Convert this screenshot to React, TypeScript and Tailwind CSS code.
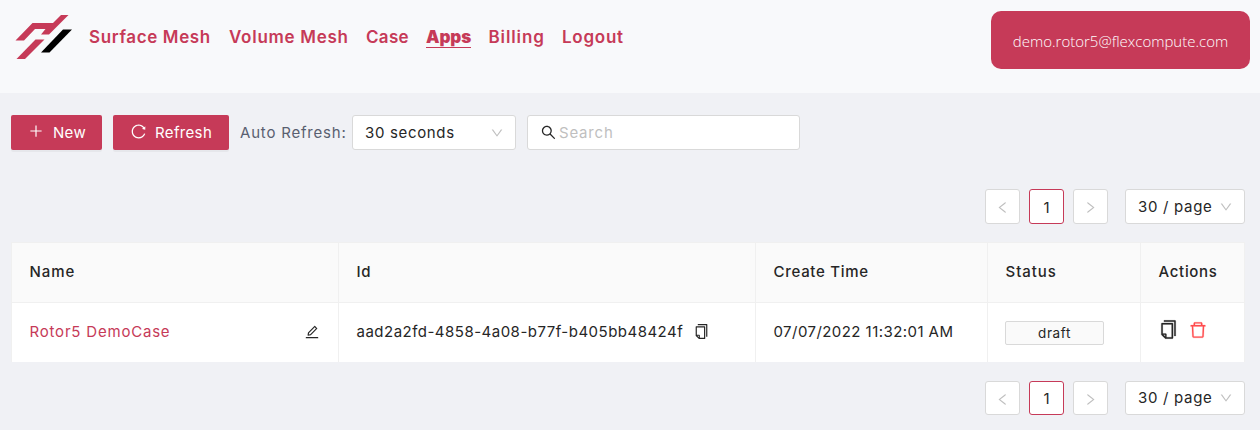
import React from "react";
import {
  AiOutlineCopy,
  AiOutlineDelete,
  AiOutlineDown,
  AiOutlineEdit,
  AiOutlineLeft,
  AiOutlinePlus,
  AiOutlineReload,
  AiOutlineRight,
  AiOutlineSearch,
} from "react-icons/ai";

function Logo() {
  return (
    <svg width="58" height="46" viewBox="0 0 58 46" className="block shrink-0">
      <path fill="#c63a58" d="M0.5 26.500 17.500 9h20.500l8-8H53.500L34 20.500h-8l4.500-5.500H20L9 26.500Z" />
      <path fill="#c63a58" d="M1.500 45 20.500 25.500H29.500L10 45Z" />
      <path fill="#000" d="M26 38.500 48 15.500h9L34.500 38.500Z" />
    </svg>
  );
}

function Pagination() {
  const box = "flex w-[35px] items-center justify-center rounded-[3px] border bg-white";
  return (
    <div className="flex h-full justify-end pr-[15px]">
      <div className={`${box} border-[#d9d9d9]`}>
        <AiOutlineLeft className="mt-0.5 text-[15px] text-[#bfbfbf]" />
      </div>
      <div className={`${box} ml-[9px] border-[#c63a58] text-[#262626]`}>
        <span className="mt-0.5">1</span>
      </div>
      <div className={`${box} ml-[9px] border-[#d9d9d9]`}>
        <AiOutlineRight className="mt-0.5 text-[15px] text-[#bfbfbf]" />
      </div>
      <div className="ml-[17px] flex w-[120px] items-center rounded-[3px] border border-[#d9d9d9] bg-white pl-3">
        <span className="w-[81px] tracking-[0.7px] whitespace-nowrap">30 / page</span>
        <AiOutlineDown className="text-[14px] text-[#bfbfbf]" />
      </div>
    </div>
  );
}

export default function App() {
  return (
    <div className="h-[430px] w-[1260px] overflow-hidden bg-[#f0f1f5] font-['Inter',sans-serif] text-[15px] leading-[22px] text-[#262626]">
      <header className="flex h-[93px] items-start justify-between bg-[#f8f9fb] pr-2.5 pl-[15px]">
        <div className="flex pt-3.5">
          <Logo />
          <nav className="ml-4 flex pt-3 text-[17px] leading-[22px] font-semibold whitespace-nowrap text-[#c63a58]">
            <a className="w-[140px] tracking-[0.63px]">Surface Mesh</a>
            <a className="w-[137px] tracking-[0.73px]">Volume Mesh</a>
            <a className="w-[60px] tracking-[0.3px]">Case</a>
            <a className="mr-[17.500px] h-[21.500px] w-[45px] border-b border-[#c63a58] font-black tracking-[-0.1px]">Apps</a>
            <a className="w-[73.500px] tracking-[0.88px]">Billing</a>
            <a className="tracking-[0.75px]">Logout</a>
          </nav>
        </div>
        <div className="mt-[11px] flex h-[58px] w-[259px] items-center justify-center rounded-[10px] bg-[#c63a58] pt-0.5 font-['Open_Sans',sans-serif] text-[15px] font-light text-white">
          demo.rotor5@flexcompute.com
        </div>
      </header>

      <main className="flex flex-col">
        <div className="mt-[22px] flex h-[35px] pl-[11px] whitespace-nowrap">
          <button className="flex w-[91px] items-center rounded-[2px] bg-[#c63a58] pl-[17px] text-white shadow-[0_2px_0_rgba(0,0,0,0.04)]">
            <AiOutlinePlus className="mb-[3px] text-[16px]" />
            <span className="ml-[9px] tracking-[0.3px]">New</span>
          </button>
          <button className="ml-[11px] flex w-[116px] items-center rounded-[2px] bg-[#c63a58] pl-[17px] text-white shadow-[0_2px_0_rgba(0,0,0,0.04)]">
            <AiOutlineReload className="mb-[3px] text-[17px]" />
            <span className="ml-[8px] tracking-[0.35px]">Refresh</span>
          </button>
          <span className="ml-[11px] w-[112px] self-center tracking-[0.8px] text-[#595f70]">Auto Refresh:</span>
          <div className="flex w-[164px] items-center justify-between rounded-[3px] border border-[#d9d9d9] bg-white pr-[11px] pl-3">
            <span className="tracking-[0.66px]">30 seconds</span>
            <AiOutlineDown className="text-[14px] text-[#bfbfbf]" />
          </div>
          <label className="ml-[11px] flex w-[273px] items-center rounded-[3px] border border-[#d9d9d9] bg-white pl-3">
            <AiOutlineSearch className="mb-px text-[17px]" />
            <span className="ml-[2px] tracking-[0.8px] text-[#bfbfbf]">Search</span>
          </label>
        </div>

        <div className="mt-[39px] h-[35px]">
          <Pagination />
        </div>

        <div className="mt-[18px] ml-[11px] grid w-[1234px] grid-cols-[327px_417px_232px_153px_104px] grid-rows-[60px_59px] border-t border-l border-[#f0f0f0] *:bg-white whitespace-nowrap *:flex *:items-center *:border-r *:border-[#f0f0f0] *:pl-[17.500px]">
          <div className="border-b bg-[#fafafa]! pb-px font-medium tracking-[0.9px]">Name</div>
          <div className="border-b bg-[#fafafa]! pb-px font-medium tracking-[0.6px]">Id</div>
          <div className="border-b bg-[#fafafa]! pb-px font-medium tracking-[0.72px]">Create Time</div>
          <div className="border-b bg-[#fafafa]! pb-px font-medium tracking-[0.95px]">Status</div>
          <div className="border-b bg-[#fafafa]! pb-px font-medium tracking-[0.7px]">Actions</div>

          <div className="justify-between pr-[18px] pb-0.5">
            <a className="tracking-[0.8px] text-[#c63a58]">Rotor5 DemoCase</a>
            <AiOutlineEdit className="text-[16px]" />
          </div>
          <div className="pb-0.5">
            <span className="w-[336px] tracking-[0.49px]">aad2a2fd-4858-4a08-b77f-b405bb48424f</span>
            <AiOutlineCopy className="text-[17px]" />
          </div>
          <div className="pb-0.5 tracking-[0.44px]">07/07/2022 11:32:01 AM</div>
          <div className="pl-[17px]!">
            <span className="flex h-6 w-[99px] items-center justify-center rounded-[2px] border border-[#d9d9d9] bg-[#fafafa] text-[13.500px] tracking-[0.6px]">
              draft
            </span>
          </div>
          <div className="pl-[17px]! pb-1.5">
            <AiOutlineCopy className="text-[21px]" stroke="currentColor" strokeWidth={10} />
            <AiOutlineDelete className="ml-[9px] text-[20px] text-[#ff4d4f]" stroke="currentColor" strokeWidth={10} />
          </div>
        </div>

        <div className="mt-[19px] h-[34px]">
          <Pagination />
        </div>
      </main>
    </div>
  );
}
